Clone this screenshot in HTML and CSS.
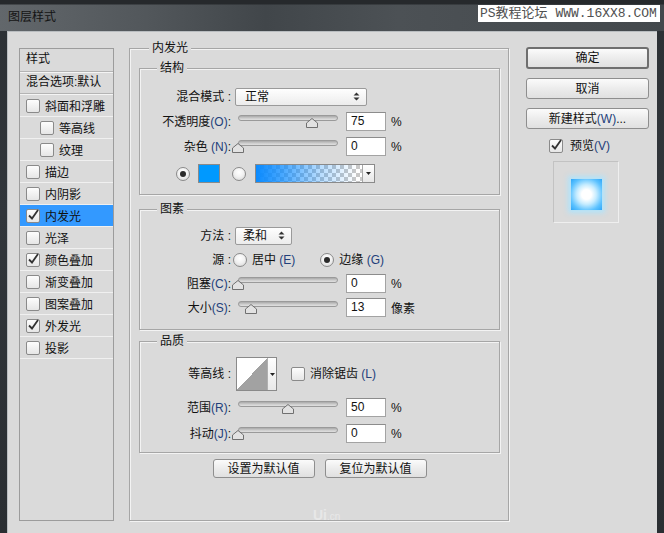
FILE: index.html
```html
<!DOCTYPE html>
<html lang="zh-CN">
<head>
<meta charset="utf-8">
<title>图层样式</title>
<link rel="stylesheet" href="styles.css">
</head>
<body>
<div class="window">
  <div class="titlebar">
    <span class="title">图层样式</span>
    <span class="site-mark">PS教程论坛 WWW.16XX8.COM</span>
  </div>
  <div class="content">
    <div class="style-list">
      <div class="list-head">样式</div>
      <div class="list-blend">混合选项:默认</div>
      <div class="list-row"><span class="cb"></span>斜面和浮雕</div>
      <div class="list-row sub"><span class="cb"></span>等高线</div>
      <div class="list-row sub"><span class="cb"></span>纹理</div>
      <div class="list-row"><span class="cb"></span>描边</div>
      <div class="list-row"><span class="cb"></span>内阴影</div>
      <div class="list-row selected"><span class="cb"><svg class="tick" viewBox="0 0 16 16" width="16" height="16"><path d="M4 8.5 L7 11.5 L13 3" fill="none" stroke="#333" stroke-width="1.8"/></svg></span>内发光</div>
      <div class="list-row"><span class="cb"></span>光泽</div>
      <div class="list-row"><span class="cb"><svg class="tick" viewBox="0 0 16 16" width="16" height="16"><path d="M4 8.5 L7 11.5 L13 3" fill="none" stroke="#333" stroke-width="1.8"/></svg></span>颜色叠加</div>
      <div class="list-row"><span class="cb"></span>渐变叠加</div>
      <div class="list-row"><span class="cb"></span>图案叠加</div>
      <div class="list-row"><span class="cb"><svg class="tick" viewBox="0 0 16 16" width="16" height="16"><path d="M4 8.5 L7 11.5 L13 3" fill="none" stroke="#333" stroke-width="1.8"/></svg></span>外发光</div>
      <div class="list-row"><span class="cb"></span>投影</div>
    </div>

    <div class="group effect">
      <span class="group-title">内发光</span>

      <div class="group inner struct">
        <span class="group-title">结构</span>
        <div class="row">
          <span class="lbl">混合模式 :</span>
          <div class="select mode"><span>正常</span><svg class="updown" viewBox="0 0 7 9" width="7" height="9"><path d="M0.5 3.5 L3.5 0.5 L6.5 3.5 Z M0.5 5.5 L3.5 8.5 L6.5 5.5 Z" fill="#333"/></svg></div>
        </div>
        <div class="row">
          <span class="lbl">不透明度<span class="mn">(O)</span>:</span>
          <div class="slider"><span class="track"></span><svg class="thumb" style="left:68px" viewBox="0 0 12 10" width="12" height="10"><path d="M0.5 9.5 V5 L6 0.5 L11.5 5 V9.5 Z" fill="#e2e2e2" stroke="#707070"/></svg></div>
          <span class="num">75</span><span class="unit">%</span>
        </div>
        <div class="row">
          <span class="lbl">杂色 <span class="mn">(N)</span>:</span>
          <div class="slider"><span class="track"></span><svg class="thumb" style="left:-6px" viewBox="0 0 12 10" width="12" height="10"><path d="M0.5 9.5 V5 L6 0.5 L11.5 5 V9.5 Z" fill="#e2e2e2" stroke="#707070"/></svg></div>
          <span class="num">0</span><span class="unit">%</span>
        </div>
        <div class="row color-row">
          <span class="radio on"></span>
          <span class="swatch"></span>
          <span class="radio second"></span>
          <div class="grad-box"><span class="grad-fill"></span><span class="grad-drop"><svg viewBox="0 0 5 3" width="5" height="3"><path d="M0 0H5L2.5 3Z" fill="#222"/></svg></span></div>
        </div>
      </div>

      <div class="group inner elements">
        <span class="group-title">图素</span>
        <div class="row">
          <span class="lbl">方法 :</span>
          <div class="select method"><span>柔和</span><svg class="updown" viewBox="0 0 7 9" width="7" height="9"><path d="M0.5 3.5 L3.5 0.5 L6.5 3.5 Z M0.5 5.5 L3.5 8.5 L6.5 5.5 Z" fill="#333"/></svg></div>
        </div>
        <div class="row">
          <span class="lbl">源 :</span>
          <span class="radio src1"></span><span class="opt">居中 <span class="mn">(E)</span></span>
          <span class="radio on src2"></span><span class="opt">边缘 <span class="mn">(G)</span></span>
        </div>
        <div class="row">
          <span class="lbl">阻塞<span class="mn">(C)</span>:</span>
          <div class="slider"><span class="track"></span><svg class="thumb" style="left:-6px" viewBox="0 0 12 10" width="12" height="10"><path d="M0.5 9.5 V5 L6 0.5 L11.5 5 V9.5 Z" fill="#e2e2e2" stroke="#707070"/></svg></div>
          <span class="num">0</span><span class="unit">%</span>
        </div>
        <div class="row">
          <span class="lbl">大小<span class="mn">(S)</span>:</span>
          <div class="slider"><span class="track"></span><svg class="thumb" style="left:7px" viewBox="0 0 12 10" width="12" height="10"><path d="M0.5 9.5 V5 L6 0.5 L11.5 5 V9.5 Z" fill="#e2e2e2" stroke="#707070"/></svg></div>
          <span class="num">13</span><span class="unit">像素</span>
        </div>
      </div>

      <div class="group inner quality">
        <span class="group-title">品质</span>
        <div class="row contour-row">
          <span class="lbl">等高线 :</span>
          <div class="contour"><span class="curve"></span><span class="drop"><svg viewBox="0 0 5 3" width="5" height="3"><path d="M0 0H5L2.5 3Z" fill="#222"/></svg></span></div>
          <span class="cb anti"></span><span class="opt">消除锯齿 <span class="mn">(L)</span></span>
        </div>
        <div class="row">
          <span class="lbl">范围<span class="mn">(R)</span>:</span>
          <div class="slider"><span class="track"></span><svg class="thumb" style="left:44px" viewBox="0 0 12 10" width="12" height="10"><path d="M0.5 9.5 V5 L6 0.5 L11.5 5 V9.5 Z" fill="#e2e2e2" stroke="#707070"/></svg></div>
          <span class="num">50</span><span class="unit">%</span>
        </div>
        <div class="row">
          <span class="lbl">抖动<span class="mn">(J)</span>:</span>
          <div class="slider"><span class="track"></span><svg class="thumb" style="left:-6px" viewBox="0 0 12 10" width="12" height="10"><path d="M0.5 9.5 V5 L6 0.5 L11.5 5 V9.5 Z" fill="#e2e2e2" stroke="#707070"/></svg></div>
          <span class="num">0</span><span class="unit">%</span>
        </div>
      </div>

      <div class="default-btns">
        <span class="btn">设置为默认值</span>
        <span class="btn">复位为默认值</span>
      </div>
      <span class="ui-mark"><b>Ui</b>.cn</span>
    </div>

    <div class="side">
      <span class="btn side-btn primary">确定</span>
      <span class="btn side-btn">取消</span>
      <span class="btn side-btn">新建样式<span class="mn">(W)</span>...</span>
      <div class="preview-row"><span class="cb"><svg class="tick" viewBox="0 0 16 16" width="16" height="16"><path d="M4 8.5 L7 11.5 L13 3" fill="none" stroke="#333" stroke-width="1.8"/></svg></span>预览<span class="mn">(V)</span></div>
      <div class="preview"><span class="glow"></span></div>
    </div>
  </div>
</div>
</body>
</html>
```

FILE: styles.css
```css
* { box-sizing: border-box; margin: 0; padding: 0; }
html, body { width: 664px; height: 533px; overflow: hidden; }
body {
  background: #2b2f33;
  font-family: "Liberation Sans", "Noto Sans CJK SC", sans-serif;
  font-size: 12px;
  color: #111;
}
.window {
  width: 664px;
  height: 533px;
  display: flex;
  flex-direction: column;
  background: linear-gradient(180deg, #2c3034 0%, #31363b 40%, #2a2e32 100%);
  position: relative;
}
.titlebar {
  height: 31px;
  flex: none;
  position: relative;
  display: flex;
  align-items: center;
  padding: 3px 0 0 8px;
  background:
    linear-gradient(180deg, #26292c 0, #26292c 4px, rgba(0,0,0,0) 5px),
    linear-gradient(90deg, #62676b 0%, #52575b 22%, #41464a 40%, #4c5155 60%, #43484c 100%);
}
.title {
  font-size: 12px;
  line-height: 16px;
  color: #141414;
}
.site-mark {
  position: absolute;
  left: 478px;
  top: 5px;
  width: 182px;
  height: 17px;
  background: #fff;
  color: #505050;
  font-family: "Liberation Mono", "Noto Sans CJK SC", monospace;
  font-size: 13px;
  line-height: 17px;
  padding-left: 2px;
  white-space: nowrap;
}
.content {
  flex: 1;
  margin: 0 7px;
  background: #dadada;
  border-left: 1px solid #b9bdc0;
  border-top: 1px solid #b9bdc0;
  display: flex;
  align-items: flex-start;
  padding: 16px 8px 0 11px;
}

/* style list */
.style-list {
  width: 95px;
  height: 473px;
  border: 1px solid #9c9c9c;
  background: #dadada;
  flex: none;
}
.list-head {
  height: 23px;
  line-height: 21px;
  padding-left: 6px;
  border-bottom: 1px solid #b4b4b4;
  box-shadow: 0 1px 0 #f4f4f4;
}
.list-blend {
  height: 22px;
  line-height: 21px;
  padding-left: 6px;
  border-bottom: 1px solid #b4b4b4;
  box-shadow: 0 1px 0 #f4f4f4;
  white-space: nowrap;
}
.list-row {
  height: 22px;
  display: flex;
  align-items: center;
  padding-left: 6px;
  border-bottom: 1px solid #f0f0f0;
}
.list-blend + .list-row { margin-top: 1px; }
.list-row.sub { padding-left: 20px; }
.list-row.selected { background: #3399ff; }
.cb {
  width: 14px;
  height: 14px;
  flex: none;
  position: relative;
  border: 1px solid #8a8a8a;
  border-radius: 2px;
  background: linear-gradient(180deg, #fdfdfd 0%, #e6e6e6 100%);
  margin-right: 5px;
}
.tick {
  position: absolute;
  left: -2px;
  top: -3px;
}

/* groups */
.group {
  position: relative;
  border: 1px solid #a6a6a6;
  box-shadow: inset 1px 1px 0 #f3f3f3, 1px 1px 0 #f3f3f3;
}
.group-title {
  position: absolute;
  top: -9px;
  left: 19px;
  padding: 0 3px;
  line-height: 16px;
  background: #dadada;
}
.effect {
  flex: none;
  width: 380px;
  height: 473px;
  margin-left: 15px;
  padding: 19px 8px 0 9px;
}
.inner .group-title { left: 17px; }
.inner { width: 361px; }
.struct { height: 127px; padding-top: 18px; }
.elements { height: 121px; margin-top: 14px; padding-top: 16px; }
.quality { height: 112px; margin-top: 11px; padding-top: 15px; }

.row {
  display: flex;
  align-items: center;
  height: 19px;
  white-space: nowrap;
}
.row + .row { margin-top: 6px; }
.elements .row + .row { margin-top: 5px; }
.quality .row + .row { margin-top: 7px; }
.struct .color-row { margin-top: 8px; padding-left: 36px; }
.contour-row { height: 34px; }
.lbl {
  width: 91px;
  flex: none;
  text-align: right;
  line-height: 16px;
}
.mn { color: #22407a; }
.select {
  margin-left: 4px;
  height: 18px;
  border: 1px solid #9a9a9a;
  border-radius: 2px;
  background: linear-gradient(180deg, #fefefe 0%, #ececec 100%);
  display: flex;
  align-items: center;
  justify-content: space-between;
  padding: 0 6px 0 9px;
  line-height: 16px;
}
.select.mode { width: 132px; }
.select.method { width: 57px; padding-left: 7px; }
.slider {
  position: relative;
  width: 100px;
  height: 19px;
  margin-left: 7px;
  flex: none;
}
.track {
  display: block;
  margin-top: 3px;
  height: 6px;
  border: 1px solid #9a9a9a;
  border-radius: 3px;
  background: linear-gradient(180deg, #a9a9a9 0%, #cfcfcf 60%, #e0e0e0 100%);
}
.thumb {
  position: absolute;
  top: 6px;
  display: block;
}
.num {
  width: 40px;
  height: 19px;
  margin-left: 8px;
  background: #fff;
  border: 1px solid #a3a3a3;
  border-top-color: #8c8c8c;
  padding-left: 4px;
  line-height: 17px;
  flex: none;
}
.unit { margin-left: 5px; }
.radio {
  width: 14px;
  height: 14px;
  flex: none;
  border-radius: 50%;
  border: 1px solid #8a8a8a;
  background: radial-gradient(circle at 50% 35%, #ffffff 0%, #f2f2f2 45%, #d4d4d4 100%);
  display: flex;
  align-items: center;
  justify-content: center;
}
.radio.on::after {
  content: "";
  width: 6px;
  height: 6px;
  border-radius: 50%;
  background: #2a2a2a;
}
.swatch {
  width: 22px;
  height: 19px;
  margin-left: 8px;
  background: #0099ff;
  border: 1px solid #8a8a8a;
}
.radio.second { margin-left: 12px; }
.grad-box {
  margin-left: 9px;
  width: 120px;
  height: 19px;
  border: 1px solid #8a8a8a;
  display: flex;
}
.grad-fill {
  flex: 1;
  background:
    linear-gradient(90deg, #0b8bff 0%, rgba(11,139,255,0.75) 25%, rgba(11,139,255,0.3) 60%, rgba(11,139,255,0) 95%),
    repeating-conic-gradient(#c8c8c8 0 25%, #ffffff 0 50%) 0 0 / 8px 8px;
}
.grad-drop {
  width: 12px;
  border-left: 1px solid #a8a8a8;
  background: linear-gradient(180deg, #ffffff, #e6e6e6);
  display: flex;
  align-items: center;
  justify-content: center;
}
.radio.src1 { margin-left: 2px; }
.radio.src2 { margin-left: 25px; }
.opt { margin-left: 5px; line-height: 16px; }
.contour {
  margin-left: 5px;
  width: 41px;
  height: 34px;
  border: 1px solid #8a8a8a;
  display: flex;
  background: #fff;
}
.curve {
  flex: 1;
  background: linear-gradient(to bottom right, #ffffff 50%, #a2a2a2 50%);
}
.drop {
  width: 9px;
  border-left: 1px solid #b0b0b0;
  background: linear-gradient(180deg, #ffffff, #e8e8e8);
  display: flex;
  align-items: center;
  justify-content: center;
}
.cb.anti { margin-left: 14px; margin-right: 0; }

.default-btns {
  margin-top: 6px;
  display: flex;
  justify-content: center;
  gap: 10px;
}
.btn {
  display: flex;
  align-items: center;
  justify-content: center;
  width: 102px;
  height: 19px;
  border: 1px solid #8e8e8e;
  border-radius: 3px;
  background: linear-gradient(180deg, #fbfbfb 0%, #ececec 50%, #e0e0e0 100%);
  line-height: 16px;
  white-space: nowrap;
}
.ui-mark {
  position: absolute;
  left: 183px;
  top: 459px;
  color: rgba(255,255,255,0.4);
  font-size: 10px;
  line-height: 14px;
}
.ui-mark b { font-size: 14px; font-weight: bold; }

/* side column */
.side {
  flex: none;
  width: 123px;
  margin-left: 17px;
  margin-top: -1px;
  display: flex;
  flex-direction: column;
}
.side-btn { width: 123px; height: 21px; margin-top: 9px; }
.side-btn.primary {
  margin-top: 0;
  height: 22px;
  border: 2px solid #6f6f6f;
}
.preview-row {
  margin-top: 10px;
  padding-left: 23px;
  height: 14px;
  display: flex;
  align-items: center;
  line-height: 16px;
}
.preview-row .cb { margin-right: 7px; }
.preview {
  margin-top: 8px;
  margin-left: 27px;
  width: 66px;
  height: 62px;
  border: 1px solid #c2c2c2;
  border-right-color: #efefef;
  border-bottom-color: #efefef;
  display: flex;
  align-items: center;
  justify-content: center;
  padding-top: 5px;
}
.glow {
  width: 31px;
  height: 31px;
  background: radial-gradient(circle, #ffffff 0%, #ffffff 22%, #c6ecff 45%, #5cc2ff 75%, #2ea6f8 100%);
  box-shadow: 0 0 5px 3px rgba(170, 228, 255, 0.85);
}
```
